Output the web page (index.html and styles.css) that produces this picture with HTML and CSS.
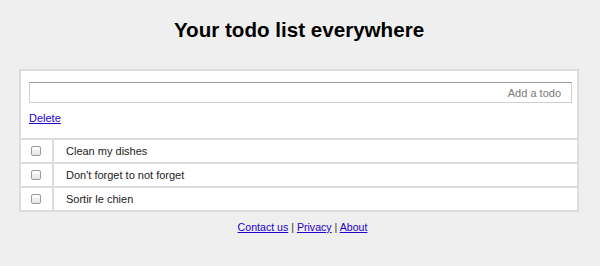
FILE: index.html
```html
<!DOCTYPE html>
<html lang="en">
<head>
    <meta charset="UTF-8">
    <meta name="viewport" content="width=device-width, initial-scale=1.0">
    <title>Todo list</title>
    <link rel="stylesheet" href="styles.css">
</head>
<body>
    <div class="page">
        <h1>Your todo list everywhere</h1>

        <div class="box">
            <div class="controls">
                <input type="text" class="new-todo" placeholder="Add a todo">
                <a href="#" class="delete">Delete</a>
            </div>
            <table class="todos">
                <tbody>
                    <tr>
                        <td class="check"><input type="checkbox"></td>
                        <td>Clean my dishes</td>
                    </tr>
                    <tr>
                        <td class="check"><input type="checkbox"></td>
                        <td>Don't forget to not forget</td>
                    </tr>
                    <tr>
                        <td class="check"><input type="checkbox"></td>
                        <td>Sortir le chien</td>
                    </tr>
                </tbody>
            </table>
        </div>

        <div class="footer">
            <a href="#contact">Contact us</a> | <a href="#privacy">Privacy</a> | <a href="#about">About</a>
        </div>
    </div>
</body>
</html>
```

FILE: styles.css
```css
body {
    margin: 0;
    padding: 0;
    background-color: #efefef;
    font-family: "Liberation Sans", Arial, Helvetica, sans-serif;
    color: #222;
}
a {
    color: #2200cc;
}
.page {
    width: 560px;
    margin-left: 19px;
}
h1 {
    margin: 18px 0 28px;
    font-size: 20.6px;
    line-height: 23px;
    text-align: center;
    color: #000;
}
.box {
    background-color: #fff;
    border: 2px solid #dddddd;
}
.controls {
    padding: 11px 5px 12px 8px;
}
.new-todo {
    display: block;
    box-sizing: border-box;
    width: 100%;
    height: 21px;
    margin: 0;
    padding: 0 10px;
    border: 1px solid #cfcfcf;
    border-top-color: #9a9a9a;
    font-family: inherit;
    font-size: 11px;
    text-align: right;
    outline: none;
}
.new-todo::placeholder {
    color: #7a7a7a;
}
.delete {
    display: inline-block;
    margin-top: 9px;
    font-size: 11px;
    line-height: 13px;
}
.todos {
    width: 100%;
    border-collapse: collapse;
}
.todos td {
    height: 22px;
    padding: 0 0 0 12px;
    border-top: 2px solid #dddddd;
    font-size: 11px;
    vertical-align: middle;
}
.todos td.check {
    width: 31px;
    padding: 0;
    border-right: 2px solid #dddddd;
    text-align: center;
}
.todos input[type="checkbox"] {
    appearance: none;
    -webkit-appearance: none;
    display: block;
    width: 10px;
    height: 10px;
    margin: 0 0 0 10px;
    border: 1px solid #9c9c9c;
    border-radius: 2px;
    background: linear-gradient(#ffffff, #e4e4e4);
    box-sizing: border-box;
}
.footer {
    margin-top: 9px;
    font-size: 10.6px;
    line-height: 13px;
    text-align: center;
    padding-left: 7px;
    color: #333;
}
```
